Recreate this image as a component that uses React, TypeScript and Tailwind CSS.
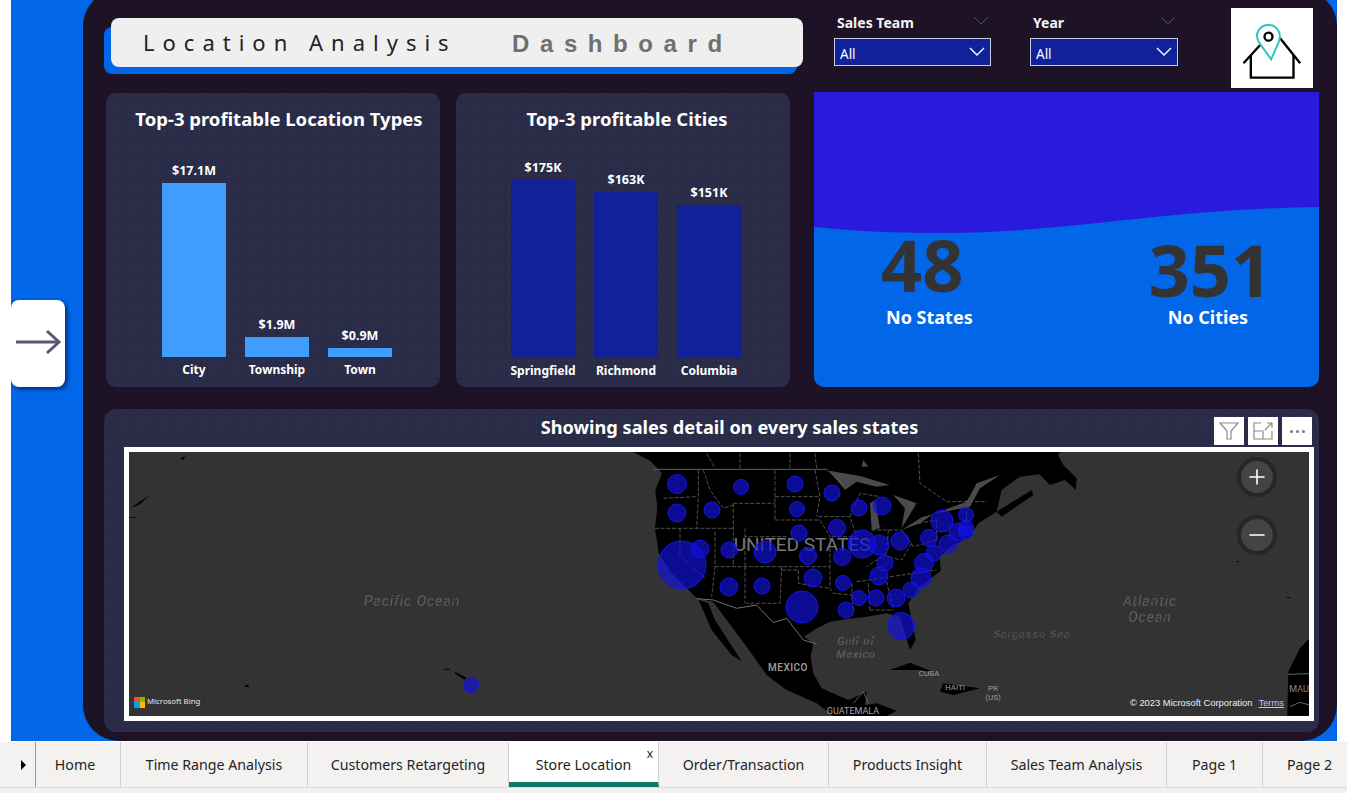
import React from "react";
import { Plus, Minus } from "lucide-react";

const tabs = [
  { name: "Home", w: "w-[85px] pr-[6px]" },
  { name: "Time Range Analysis", w: "w-[187px]" },
  { name: "Customers Retargeting", w: "w-[201px]" },
  { name: "Store Location", w: "w-[150px]", active: true },
  { name: "Order/Transaction", w: "w-[170px]" },
  { name: "Products Insight", w: "w-[158px]" },
  { name: "Sales Team Analysis", w: "w-[180px]" },
  { name: "Page 1", w: "w-[96px]" },
  { name: "Page 2", w: "w-[94px]" },
];

// [x, y, r] in page pixels
const bubbles = [
  [682, 565, 24], [677, 484, 9.5], [741, 487, 7.5], [795, 484, 8], [832, 493, 8], [677, 513, 9],
  [712, 510, 8], [797, 509, 7.5], [859, 508, 8], [882, 506, 9], [942, 521, 11], [966, 515, 7.5],
  [837, 528, 8.5], [799, 533, 8], [700, 549, 9], [729, 550, 8], [765, 552, 11], [808, 556, 8.5],
  [842, 557, 8.5], [862, 544, 14], [879, 545, 10], [900, 541, 9], [929, 538, 8.5], [958, 532, 9],
  [966, 528, 7.5], [966, 532, 7], [948, 544, 9], [934, 553, 8], [924, 563, 9.5], [885, 563, 8],
  [879, 576, 9], [921, 578, 10], [813, 578, 9], [843, 583, 7.5], [729, 587, 9], [762, 586, 8],
  [911, 590, 8], [859, 598, 7.5], [876, 598, 8], [896, 598, 9], [802, 607, 16], [846, 610, 8],
  [901, 626, 13.5], [471, 685, 7.5],
];

const stateLines = [
  "190,175 290,170", "295,90 295,175 290,265", "310,90 330,150 370,205 400,195", "165,265 400,265",
  "400,190 400,380", "400,190 525,190", "525,170 655,170", "525,90 525,240", "525,240 660,240 690,290",
  "435,265 435,380", "560,290 435,290", "345,275 345,380 335,470", "345,380 690,380", "435,380 435,490",
  "545,380 540,490 440,490", "545,390 595,390 595,430 690,445", "690,290 690,445 700,460 760,465",
  "655,230 750,230 770,290 690,290", "645,90 660,170 650,230", "240,265 240,345 320,420",
  "755,430 760,520", "805,430 810,510", "860,425 880,510", "810,510 880,510", "770,425 1010,390",
  "750,230 780,160 840,170", "815,270 905,270", "865,270 860,340 800,380", "935,310 905,360 860,350",
  "905,270 940,320 1010,300", "955,250 1010,240 1010,300", "1100,180 1100,250", "955,40 960,130 1040,185 1160,185",
  "320,40 345,85", "420,40 420,85", "570,40 570,85", "645,40 650,85",
];

const cardBg =
  "bg-[#292b47] bg-[radial-gradient(rgba(130,140,180,0.07)_1px,transparent_1px)] bg-[size:5px_5px]";

function MapDrawing() {
  return (
    <svg viewBox="129 452 1180 264" className="absolute inset-0 w-full h-full" fontFamily="Roboto, sans-serif">
      <rect x="129" y="452" width="1180" height="264" fill="#333333" />

      {/* north america, traced from the reference */}
      <g transform="translate(600 440) scale(0.3333)">
        <path
          fill="#000"
          d="M100 36 L150 62 L186 100 L166 150 L172 200 L165 265 L176 340 L215 400 L290 475 L340 486 L380 540 L440 620 L500 705 L560 750 L650 790 L700 828 L860 828 L890 812 L830 790 L795 795 L800 755 L745 780 L665 745 L640 700 L632 650 L640 610 L612 590 L645 568 L690 545 L740 537 L800 530 L860 520 L900 530 L930 630 L947 600 L935 540 L925 490 L960 440 L1022 392 L1020 350 L1050 320 L1110 290 L1135 250 L1190 215 L1205 150 L1260 110 L1340 100 L1380 36 Z"
        />
        <path fill="#000" d="M296 480 L325 490 L345 540 L425 664 L395 645 L335 570 Z" />
        <path fill="#000" d="M870 690 L930 668 L1010 700 L960 690 Z M1030 730 L1140 745 L1060 765 L1020 755 Z" />
        {/* lakes and the st lawrence */}
        <path
          fill="#4a4a4a"
          d="M688 92 L780 108 L870 135 L830 140 L770 125 L735 150 Z M810 190 L825 180 L840 265 L815 270 Z M880 165 L950 190 L905 265 L915 205 Z M905 270 L965 232 L1000 222 L960 250 Z M1000 222 L1100 185 L1130 130 L1200 105 L1140 145 L1110 200 Z M790 60 L805 80 L785 80 Z"
        />
        <g fill="none" stroke="#505050" strokeWidth="3" strokeDasharray="12 5">
          {stateLines.map((p) => (
            <polyline key={p} points={p} />
          ))}
        </g>
        <polyline fill="none" stroke="#606060" strokeWidth="3" points="160,88 680,88 730,135" />
        <polyline fill="none" stroke="#707070" strokeWidth="3" points="290,476 340,480 410,505 470,495 520,548 560,535 610,600 650,612" />
        <polyline fill="none" stroke="#606060" strokeWidth="3" points="760,790 790,755 805,790" />
      </g>

      {/* maritimes, newfoundland, africa and the odd islet */}
      <g transform="translate(950 445) scale(0.3333)" fill="#000">
        <path d="M140 200 L245 135 L250 150 L155 215 Z" />
        <path d="M265 85 L320 22 L340 60 L380 100 L378 135 L345 105 L300 120 Z" />
        <path d="M1078 580 L1050 610 L1015 680 L1012 812 L1078 812 Z" />
        <path d="M85 635 L115 665 L95 645 Z M1010 456 h12 v2 h-12 Z M858 348 h10 v2 h-10 Z" />
        <polyline fill="none" stroke="#666" strokeWidth="3" points="1012,688 1078,686" />
        <polyline fill="none" stroke="#666" strokeWidth="3" points="1020,785 1050,772 1078,780" />
      </g>
      <g transform="translate(120 445) scale(0.3333)" fill="#000">
        <path d="M182 42 L196 30 L190 44 Z M30 190 L90 150 L60 178 Z M24 216 h26 v2 h-26 Z M376 720 h10 v6 h-10 Z" />
        <path d="M972 671 L990 671 L990 674 L972 674 Z M1004 680 L1040 698 L1035 704 L1006 686 Z" />
      </g>

      <g fill="#7a7a7a" stroke="#222" strokeWidth="0.3" textAnchor="middle">
        <text x="412" y="606" fontSize="14" fontStyle="italic" letterSpacing="1">Pacific Ocean</text>
        <text x="1150" y="606" fontSize="14" fontStyle="italic" letterSpacing="1">Atlantic</text>
        <text x="1150" y="622" fontSize="14" fontStyle="italic" letterSpacing="1">Ocean</text>
        <text x="1032" y="638" fontSize="11" fontStyle="italic" letterSpacing="1">Sargasso Sea</text>
        <text x="856" y="645" fontSize="11" fontStyle="italic" letterSpacing="0.8" fill="#8e8e8e">Gulf of</text>
        <text x="856" y="658" fontSize="11" fontStyle="italic" letterSpacing="0.8" fill="#8e8e8e">Mexico</text>
        <text x="788" y="671" fontSize="10" fontWeight="500" fill="#a0a0a0" stroke="none" letterSpacing="0.5">MEXICO</text>
        <text x="929" y="676" fontSize="8" fill="#a0a0a0" stroke="none">CUBA</text>
        <text x="955" y="690" fontSize="8" fill="#a0a0a0" stroke="none">HAITI</text>
        <text x="993" y="691" fontSize="8" fill="#999" stroke="none">PR</text>
        <text x="993" y="700" fontSize="8" fill="#999" stroke="none">(US)</text>
        <text x="853" y="714" fontSize="9" fill="#a0a0a0" stroke="none">GUATEMALA</text>
        <text x="1299" y="692" fontSize="9" fill="#888" stroke="none">MAU</text>
        <text x="802" y="551" fontSize="19" fill="#777" stroke="none">UNITED STATES</text>
      </g>

      <g>
        {bubbles.map(([x, y, r], i) => (
          <circle key={i} cx={x} cy={y} r={r} fill="#1010e0" fillOpacity="0.66" stroke="#1414ee" strokeWidth="1" />
        ))}
      </g>
    </svg>
  );
}

function BingLogo() {
  return (
    <div className="absolute left-[5px] bottom-[8px] flex items-center gap-[2px] text-[7.8px] text-[#e8e8e8]">
      <div className="grid grid-cols-2 w-[11px] h-[11px]">
        <div className="bg-[#f25022]" />
        <div className="bg-[#7fba00]" />
        <div className="bg-[#00a4ef]" />
        <div className="bg-[#ffb900]" />
      </div>
      <span>Microsoft Bing</span>
    </div>
  );
}

function MapZoomButton({ children }: { children: React.ReactNode }) {
  return (
    <div className="w-[40px] h-[40px] rounded-full bg-[#444444] border-[4px] border-[#262626] flex items-center justify-center text-white">
      {children}
    </div>
  );
}

function BarChart({
  bars,
  color,
}: {
  bars: { label: string; value: string; h: string }[];
  color: string;
}) {
  return (
    <div className="flex items-end gap-[19px]">
      {bars.map((b) => (
        <div key={b.label} className="w-[64px] flex flex-col items-center">
          <span className="text-[12.5px] font-bold text-white leading-[18px] whitespace-nowrap mb-[3px]">{b.value}</span>
          <div className={`w-[64px] ${b.h} ${color}`} />
          <span className="text-[12px] font-bold text-white leading-[18px] mt-[4px] whitespace-nowrap">{b.label}</span>
        </div>
      ))}
    </div>
  );
}

function Slicer({ title, w }: { title: string; w: string }) {
  return (
    <div className={`${w} flex flex-col`}>
      <div className="flex items-center justify-between pl-[3px] pr-[2px] h-[28px] pt-[16px]">
        <span className="text-[14px] font-bold text-[#f2f2f2]">{title}</span>
        <svg width="16" height="10" viewBox="0 0 16 10" fill="none" stroke="#55505e" strokeWidth="1" className="-mt-[3px]">
          <polyline points="1,1 8,8 15,1" />
        </svg>
      </div>
      <div className="h-[28px] mt-[10px] bg-[#10219a] border border-[#c9c9dc] flex items-center justify-between pl-[5px] pr-[5px]">
        <span className="text-[13.5px] text-white leading-none mt-[5px]">All</span>
        <svg width="16" height="10" viewBox="0 0 16 10" fill="none" stroke="#fff" strokeWidth="1.4">
          <polyline points="1,1 8,8 15,1" />
        </svg>
      </div>
    </div>
  );
}

function Logo() {
  return (
    <div className="w-[82px] h-[80px] bg-white mt-[8px] ml-[53px]">
      <svg viewBox="1247 24 227 240" className="w-full h-full" fill="none">
        <polyline points="1275,190 1325,135" stroke="#000" strokeWidth="7" />
        <polyline points="1385,115 1445,190" stroke="#000" strokeWidth="7" />
        <polyline points="1297,165 1297,233 1425,233 1425,165" stroke="#000" strokeWidth="7" />
        <circle cx="1350" cy="110" r="12" stroke="#000" strokeWidth="7" />
        <path
          d="M1358 178 L1322 128 C1305 100 1325 75 1350 75 C1375 75 1392 100 1380 128 Z"
          stroke="#2fc4c4"
          strokeWidth="6"
        />
      </svg>
    </div>
  );
}

function TabBar() {
  return (
    <div className="h-[52px] mt-[1px] bg-[#f3f2f1] text-[14.2px] text-[#252423]">
      <div className="h-[46px] border-b border-[#dcdbd9] flex overflow-hidden">
        <div className="w-[36px] pl-[21px] border-r border-[#9a9a9a] flex items-center shrink-0">
          <div className="w-0 h-0 border-y-[5px] border-y-transparent border-l-[5px] border-l-black" />
        </div>
        {tabs.map((t) => (
          <div
            key={t.name}
            className={`${t.w} shrink-0 relative flex items-center justify-center border-r border-[#cfcfcf] ${
              t.active ? "bg-white border-b-[5px] border-b-[#117865] text-[#201f1e]" : ""
            }`}
          >
            <span className={t.active ? "mt-[5px] whitespace-nowrap" : "whitespace-nowrap"}>{t.name}</span>
            {t.active && <span className="absolute right-[5px] top-[3px] text-[12px]">x</span>}
          </div>
        ))}
      </div>
    </div>
  );
}

export default function App() {
  return (
    <div className="w-[1347px] h-[793px] overflow-hidden bg-white font-['Noto_Sans',sans-serif]">
      <div className="ml-[11px] w-[1326px] h-[741px] bg-[#0166e8] flex overflow-hidden">
        {/* left strip with the arrow button */}
        <div className="w-[72px] shrink-0 pt-[300px]">
          <div className="w-[54px] h-[87px] bg-white rounded-[8px] shadow-[2px_2px_4px_rgba(0,0,40,0.6)] flex items-center justify-center pb-[3px]">
            <svg width="48" height="26" viewBox="0 0 48 26" fill="none" stroke="#5a5570" strokeWidth="3">
              <line x1="2" y1="13" x2="45" y2="13" />
              <polyline points="33,2 45,13 33,24" />
            </svg>
          </div>
        </div>

        {/* main report panel */}
        <div className="w-[1254px] h-[751px] -mt-[10px] pt-[10px] pl-[21px] rounded-[36px] bg-[#1e1326] flex flex-col shrink-0">
          <div className="flex h-[92px] items-start">
            <div className="w-[700px] mt-[27px]">
              <div className="w-[693px] h-[47px] bg-[#0166e8] rounded-[8px]">
                <div className="relative -top-[9px] left-[7px] w-[692px] h-[49px] rounded-[8px] bg-[#efefef] flex items-center pl-[32px]">
                  <span className="text-[22px] text-[#222] tracking-[8px] whitespace-pre">Location Analysis</span>
                  <span className="absolute left-[401px] top-[8px] text-[24px] font-bold text-[#6f6f6f] tracking-[10.6px] font-['Liberation_Sans',sans-serif]">
                    Dashboard
                  </span>
                </div>
              </div>
            </div>
            <div className="ml-[30px]">
              <Slicer title="Sales Team" w="w-[157px]" />
            </div>
            <div className="ml-[39px]">
              <Slicer title="Year" w="w-[148px]" />
            </div>
            <Logo />
          </div>

          <div className="flex h-[295px] pl-[2px]">
            <div className={`w-[334px] h-[294px] mt-[1px] rounded-[10px] flex flex-col ${cardBg}`}>
              <h2 className="text-[18.5px] font-bold text-white mt-[11px] leading-[30px] text-center pl-[12px]">
                Top-3 profitable Location Types
              </h2>
              <div className="ml-[56px] mt-[28px]">
                <BarChart
                  color="bg-[#3e9dff]"
                  bars={[
                    { label: "City", value: "$17.1M", h: "h-[174px]" },
                    { label: "Township", value: "$1.9M", h: "h-[20px]" },
                    { label: "Town", value: "$0.9M", h: "h-[9px]" },
                  ]}
                />
              </div>
            </div>
            <div className={`w-[334px] h-[294px] mt-[1px] ml-[16px] rounded-[10px] flex flex-col ${cardBg}`}>
              <h2 className="text-[18.5px] font-bold text-white mt-[11px] leading-[30px] text-center pl-[8px]">
                Top-3 profitable Cities
              </h2>
              <div className="ml-[55px] mt-[25px]">
                <BarChart
                  color="bg-[#10219a]"
                  bars={[
                    { label: "Springfield", value: "$175K", h: "h-[178px]" },
                    { label: "Richmond", value: "$163K", h: "h-[166px]" },
                    { label: "Columbia", value: "$151K", h: "h-[153px]" },
                  ]}
                />
              </div>
            </div>

            {/* totals card with wave */}
            <div className="relative w-[505px] h-[295px] ml-[24px] bg-[#0166e8] rounded-b-[10px] overflow-hidden">
              <svg viewBox="0 0 505 295" className="absolute inset-0 w-full h-full">
                <path d="M0 135 C60 141 100 141 133 141 C250 141 350 117 505 115 V0 H0 Z" fill="#2a1adb" />
              </svg>
              <div className="relative flex">
                <div className="ml-[72px] mt-[144px] flex flex-col">
                  <span className="text-[72px] font-bold text-[#333333] leading-[56px] -ml-[5px]">48</span>
                  <span className="text-[18px] font-bold text-white leading-[26px] mt-[12px]">No States</span>
                </div>
                <div className="ml-[195px] mt-[149px] flex flex-col">
                  <span className="text-[72px] font-bold text-[#333333] leading-[56px] -ml-[19px]">351</span>
                  <span className="text-[18px] font-bold text-white leading-[26px] mt-[7px]">No Cities</span>
                </div>
              </div>
            </div>
          </div>

          <div className={`relative w-[1215px] h-[323px] mt-[22px] rounded-[12px] flex flex-col ${cardBg}`}>
            <h2 className="text-[18.2px] font-bold text-white text-center leading-[30px] mt-[3px] ml-[36px] h-[35px]">
              Showing sales detail on every sales states
            </h2>
            {/* visual header icons */}
            <div className="absolute right-[7px] top-[8px] flex gap-[4px] z-10">
              <div className="w-[30px] h-[28px] bg-white flex items-center justify-center">
                <svg width="20" height="20" viewBox="0 0 20 20" fill="none" stroke="#8a8a8a" strokeWidth="1.2">
                  <path d="M1 2 H19 L12 10 V18 H8 V10 Z" />
                </svg>
              </div>
              <div className="w-[30px] h-[28px] bg-white flex items-center justify-center">
                <svg width="20" height="18" viewBox="0 0 20 18" fill="none" stroke="#8a8a8a" strokeWidth="1.2">
                  <path d="M8 1 H1 V17 H19 V9 M1 9 H10 V17 M12 8 L19 1 M14 1 H19 V6" />
                </svg>
              </div>
              <div className="w-[30px] h-[28px] bg-white flex items-center justify-center gap-[3px]">
                <div className="w-[3px] h-[3px] rounded-full bg-[#777]" />
                <div className="w-[3px] h-[3px] rounded-full bg-[#777]" />
                <div className="w-[3px] h-[3px] rounded-full bg-[#777]" />
              </div>
            </div>
            <div className="w-[1190px] h-[274px] ml-[20px] p-[5px] bg-white">
              <div className="relative w-full h-full overflow-hidden">
                <MapDrawing />
                <BingLogo />
                <div className="absolute right-[32px] top-[5px] flex flex-col gap-[18px]">
                  <MapZoomButton>
                    <Plus size={24} strokeWidth={1.6} />
                  </MapZoomButton>
                  <MapZoomButton>
                    <Minus size={24} strokeWidth={1.6} />
                  </MapZoomButton>
                </div>
                <div className="absolute right-[25px] bottom-[6px] flex gap-[6px] text-[9.4px] text-[#eeeeee] font-['Liberation_Sans',sans-serif]">
                  <span>© 2023 Microsoft Corporation</span>
                  <span className="underline text-[#b9c6ff]">Terms</span>
                </div>
              </div>
            </div>
          </div>
        </div>
      </div>
      <TabBar />
    </div>
  );
}
